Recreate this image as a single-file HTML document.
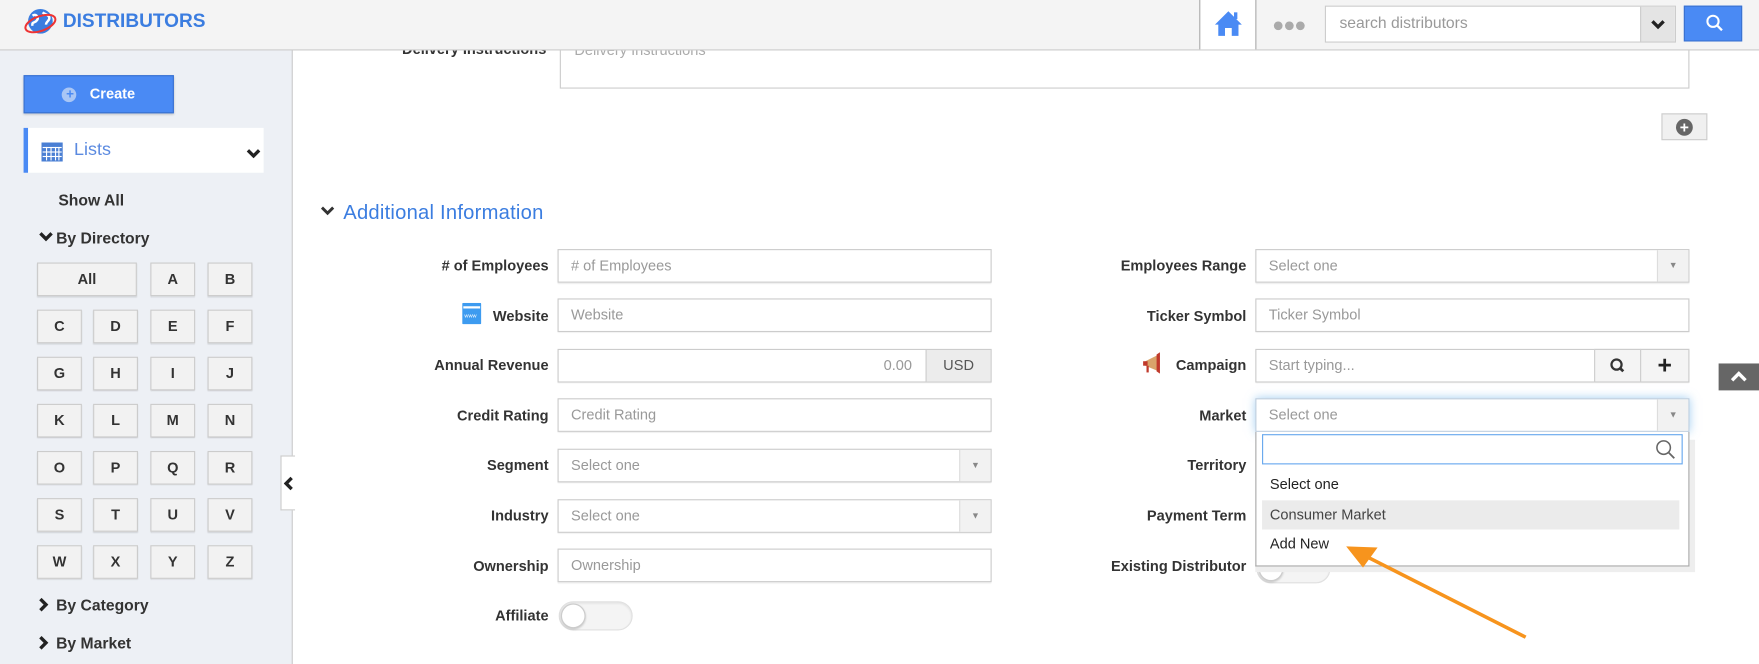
<!DOCTYPE html>
<html><head><meta charset="utf-8"><style>
*{box-sizing:border-box;margin:0;padding:0}
html,body{width:1759px;height:664px;overflow:hidden;background:#fff}
#w{position:absolute;left:0;top:0;width:1568px;height:592px;transform:scale(1.12181);transform-origin:0 0;font-family:"Liberation Sans",Arial,sans-serif;color:#333}
.a{position:absolute}
.hdr{left:0;top:0;width:1568px;height:45px;background:#f4f4f4;border-bottom:1px solid #ccc}
.side{left:0;top:45px;width:261px;height:547px;background:#edf0f5;border-right:1px solid #ccc}
.lb{font-size:13px;font-weight:bold;color:#333;text-align:right;width:200px;line-height:16px}
.in{height:30px;border:1px solid #ccc;background:#fff;font-size:13px;color:#999;padding-left:11px;line-height:28px;box-shadow:0 1px 1px rgba(0,0,0,.08)}
.btn{width:40px;height:30px;background:#f2f2f2;border:1px solid #ccc;box-shadow:0 1px 1px rgba(0,0,0,.12);text-align:center;font-size:13px;font-weight:bold;line-height:28px;color:#333}
.arr{position:absolute;right:0;top:0;width:28px;height:28px;background:#f2f2f2;border-left:1px solid #ddd;font-size:8px;color:#888;text-align:center;line-height:28px}
.tg{width:66px;height:26px;border-radius:13px;background:#f4f4f4;border:1px solid #e0e0e0;box-shadow:inset 0 1px 2px rgba(0,0,0,.08)}
.tg i{position:absolute;left:1px;top:1px;width:22px;height:22px;border-radius:50%;background:#fff;border:1px solid #ccc;box-shadow:0 1px 2px rgba(0,0,0,.2)}
</style></head><body><div id="w">
<div class="a lb" style="left:287px;top:36px">Delivery Instructions</div>
<div class="a" style="left:499px;top:20px;width:1007px;height:59px;border:1px solid #ccc;font-size:13px;color:#aaa;padding:16px 12px">Delivery Instructions</div>
<div class="hdr a"></div>
<svg class="a" style="left:21px;top:6px" width="30" height="28" viewBox="0 0 30 28"><circle cx="15" cy="13" r="11" fill="#3b7de0"/><path d="M8 8c3-2 6 1 4 4s-5 1-4 5M17 5c2 2 6 2 6 5s-3 3-3 6" stroke="#fff" stroke-width="2.2" fill="none"/><ellipse cx="15" cy="15" rx="14" ry="6.5" transform="rotate(-20 15 15)" stroke="#e33" stroke-width="1.8" fill="none"/></svg>
<div class="a" style="left:56px;top:9px;font-size:17px;font-weight:bold;color:#3b7de0">DISTRIBUTORS</div>
<div class="a" style="left:1069px;top:0;width:51px;height:44px;background:#fff;border-left:1px solid #aaa;border-right:1px solid #aaa"></div>
<svg class="a" style="left:1082px;top:8px" width="26" height="26" viewBox="0 0 26 26"><path d="M13 2L1 14h3v10h6v-7h6v7h6V14h3z" fill="#4a8af4"/><rect x="18" y="3" width="3" height="6" fill="#4a8af4"/></svg>
<div class="a" style="left:1134px;top:12px;font-size:18px;color:#aaa;letter-spacing:-1px">●●●</div>
<div class="a" style="left:1181px;top:5px;width:313px;height:33px;border:1px solid #ccc;background:#fff;font-size:14px;color:#999;padding-left:12px;line-height:29px">search distributors</div>
<div class="a" style="left:1462px;top:6px;width:31px;height:31px;background:#e4e4e4;border-left:1px solid #ccc;text-align:center"><svg width="14" height="31" viewBox="0 0 14 31"><path d="M2 13l5 5 5-5" stroke="#222" stroke-width="3" fill="none"/></svg></div>
<div class="a" style="left:1501px;top:5px;width:52px;height:32px;background:#4a8af4;border:1px solid #3a72d0"><svg width="52" height="30" viewBox="0 0 52 30"><circle cx="25" cy="13" r="5" stroke="#fff" stroke-width="1.8" fill="none"/><path d="M29 17l4 4" stroke="#fff" stroke-width="2"/></svg></div>

<div class="side a"></div>
<div class="a" style="left:21px;top:67px;width:134px;height:34px;background:#4a8af4;border:1px solid #3a72d0;box-shadow:0 1px 2px rgba(0,0,0,.2);color:#fff;font-size:13px;font-weight:bold;line-height:32px"><span style="position:absolute;left:33px;top:10px;width:13px;height:13px;border-radius:50%;background:#a9c6f5"></span><span style="position:absolute;left:37px;top:9px;color:#4a8af4;font-size:12px;line-height:14px">+</span><span style="position:absolute;left:58px">Create</span></div>
<div class="a" style="left:21px;top:114px;width:214px;height:40px;background:#fff;border-left:4px solid #4a8af4"></div>
<svg class="a" style="left:37px;top:127px" width="19" height="17" viewBox="0 0 19 17"><rect width="19" height="17" fill="#4a7fd4"/><g fill="#fff"><rect x="1" y="4" width="17" height="1"/><rect x="1" y="8" width="17" height="1"/><rect x="1" y="12" width="17" height="1"/><rect x="4" y="4" width="1" height="12"/><rect x="8" y="4" width="1" height="12"/><rect x="12" y="4" width="1" height="12"/><rect x="15" y="4" width="1" height="12"/></g></svg>
<div class="a" style="left:66px;top:125px;font-size:16px;color:#5b8ae0">Lists</div>
<svg class="a" style="left:219px;top:132px" width="14" height="10" viewBox="0 0 14 10"><path d="M2 2l5 5 5-5" stroke="#222" stroke-width="3" fill="none"/></svg>
<div class="a" style="left:52px;top:170px;font-size:14px;font-weight:bold">Show All</div>
<svg class="a" style="left:34px;top:206px" width="14" height="10" viewBox="0 0 14 10"><path d="M2 2l5 5 5-5" stroke="#222" stroke-width="3" fill="none"/></svg>
<div class="a" style="left:50px;top:204px;font-size:14px;font-weight:bold">By Directory</div>
<div class="a btn" style="left:33px;top:234px;width:89px">All</div>
<div class="a btn" style="left:134px;top:234px">A</div><div class="a btn" style="left:185px;top:234px">B</div>
<div class="a btn" style="left:33px;top:276px">C</div><div class="a btn" style="left:83px;top:276px">D</div><div class="a btn" style="left:134px;top:276px">E</div><div class="a btn" style="left:185px;top:276px">F</div>
<div class="a btn" style="left:33px;top:318px">G</div><div class="a btn" style="left:83px;top:318px">H</div><div class="a btn" style="left:134px;top:318px">I</div><div class="a btn" style="left:185px;top:318px">J</div>
<div class="a btn" style="left:33px;top:360px">K</div><div class="a btn" style="left:83px;top:360px">L</div><div class="a btn" style="left:134px;top:360px">M</div><div class="a btn" style="left:185px;top:360px">N</div>
<div class="a btn" style="left:33px;top:402px">O</div><div class="a btn" style="left:83px;top:402px">P</div><div class="a btn" style="left:134px;top:402px">Q</div><div class="a btn" style="left:185px;top:402px">R</div>
<div class="a btn" style="left:33px;top:444px">S</div><div class="a btn" style="left:83px;top:444px">T</div><div class="a btn" style="left:134px;top:444px">U</div><div class="a btn" style="left:185px;top:444px">V</div>
<div class="a btn" style="left:33px;top:486px">W</div><div class="a btn" style="left:83px;top:486px">X</div><div class="a btn" style="left:134px;top:486px">Y</div><div class="a btn" style="left:185px;top:486px">Z</div>
<svg class="a" style="left:34px;top:532px" width="10" height="14" viewBox="0 0 10 14"><path d="M2 2l5 5-5 5" stroke="#222" stroke-width="3" fill="none"/></svg>
<div class="a" style="left:50px;top:531px;font-size:14px;font-weight:bold">By Category</div>
<svg class="a" style="left:34px;top:566px" width="10" height="14" viewBox="0 0 10 14"><path d="M2 2l5 5-5 5" stroke="#222" stroke-width="3" fill="none"/></svg>
<div class="a" style="left:50px;top:565px;font-size:14px;font-weight:bold">By Market</div>
<div class="a" style="left:250px;top:406px;width:13px;height:49px;background:#fff;border:1px solid #ccc;border-right:none"></div>
<svg class="a" style="left:253px;top:424px" width="10" height="14" viewBox="0 0 10 14"><path d="M7 2L2 7l5 5" stroke="#222" stroke-width="3" fill="none"/></svg>

<div class="a" style="left:1481px;top:101px;width:41px;height:24px;background:#f0f0f0;border:1px solid #ccc"><span style="position:absolute;left:12px;top:4px;width:15px;height:15px;border-radius:50%;background:#666;color:#fff;font-size:14px;font-weight:bold;line-height:15px;text-align:center">+</span></div>

<svg class="a" style="left:285px;top:183px" width="14" height="10" viewBox="0 0 14 10"><path d="M2 2l5 5 5-5" stroke="#333" stroke-width="2.6" fill="none"/></svg>
<div class="a" style="left:306px;top:179px;font-size:18px;color:#3b7de0;letter-spacing:0.2px">Additional Information</div>

<div class="a lb" style="left:289px;top:229px"># of Employees</div>
<div class="a in" style="left:497px;top:222px;width:387px"># of Employees</div>
<svg class="a" style="left:412px;top:270px" width="17" height="19" viewBox="0 0 17 19"><rect width="17" height="19" rx="1" fill="#3d9bf0"/><rect x="1" y="3" width="15" height="2" fill="#fff"/><text x="2" y="13" font-size="5" fill="#fff" font-family="Liberation Sans">www</text></svg>
<div class="a lb" style="left:289px;top:274px">Website</div>
<div class="a in" style="left:497px;top:266px;width:387px">Website</div>
<div class="a lb" style="left:289px;top:318px">Annual Revenue</div>
<div class="a in" style="left:497px;top:311px;width:387px;padding:0"><span style="position:absolute;right:70px">0.00</span><span style="position:absolute;right:0;top:0;width:58px;height:28px;background:#ececec;border-left:1px solid #ccc;color:#555;text-align:center">USD</span></div>
<div class="a lb" style="left:289px;top:363px">Credit Rating</div>
<div class="a in" style="left:497px;top:355px;width:387px">Credit Rating</div>
<div class="a lb" style="left:289px;top:407px">Segment</div>
<div class="a in" style="left:497px;top:400px;width:387px">Select one<span class="arr">▼</span></div>
<div class="a lb" style="left:289px;top:452px">Industry</div>
<div class="a in" style="left:497px;top:445px;width:387px">Select one<span class="arr">▼</span></div>
<div class="a lb" style="left:289px;top:497px">Ownership</div>
<div class="a in" style="left:497px;top:489px;width:387px">Ownership</div>
<div class="a lb" style="left:289px;top:541px">Affiliate</div>
<div class="a tg" style="left:498px;top:536px"><i></i></div>

<div class="a lb" style="left:911px;top:229px">Employees Range</div>
<div class="a in" style="left:1119px;top:222px;width:387px">Select one<span class="arr">▼</span></div>
<div class="a lb" style="left:911px;top:274px">Ticker Symbol</div>
<div class="a in" style="left:1119px;top:266px;width:387px">Ticker Symbol</div>
<svg class="a" style="left:1018px;top:313px" width="22" height="22" viewBox="0 0 22 22"><path d="M3 9l12-6v15L3 13z" fill="#d9a36a"/><path d="M13 3l3-2v19l-3-2z" fill="#c0392b"/><rect x="1" y="9" width="4" height="4" fill="#c0392b"/><rect x="4" y="13" width="2" height="6" fill="#c0392b"/></svg>
<div class="a lb" style="left:911px;top:318px">Campaign</div>
<div class="a in" style="left:1119px;top:311px;width:387px">Start typing...</div>
<div class="a" style="left:1421px;top:311px;width:42px;height:30px;background:#f4f4f4;border:1px solid #ccc"><svg width="40" height="28" viewBox="0 0 40 28"><circle cx="19" cy="13" r="4.5" stroke="#333" stroke-width="2" fill="none"/><path d="M22 16l3 3" stroke="#333" stroke-width="2.5"/></svg></div>
<div class="a" style="left:1462px;top:311px;width:44px;height:30px;background:#f4f4f4;border:1px solid #ccc;text-align:center;font-size:22px;font-weight:bold;line-height:27px;color:#222">+</div>
<div class="a lb" style="left:911px;top:363px">Market</div>
<div class="a lb" style="left:911px;top:407px">Territory</div>
<div class="a lb" style="left:911px;top:452px">Payment Term</div>
<div class="a lb" style="left:911px;top:497px">Existing Distributor</div>
<div class="a tg" style="left:1120px;top:494px"><i></i></div>
<div class="a" style="left:1119px;top:392px;width:392px;height:118px;background:#eee"></div>
<div class="a in" style="left:1119px;top:355px;width:387px;box-shadow:0 0 8px rgba(102,175,233,.6);border-color:#bcd">Select one<span class="arr">▼</span></div>
<div class="a" style="left:1119px;top:385px;width:387px;height:120px;background:#fff;border:1px solid #aaa;border-top:none"></div>
<div class="a" style="left:1125px;top:387px;width:375px;height:27px;border:1px solid #66a7ee"><svg class="a" style="right:4px;top:3px" width="20" height="20" viewBox="0 0 20 20"><circle cx="8" cy="8" r="6" stroke="#666" stroke-width="1.4" fill="none"/><path d="M12.5 12.5l5 5" stroke="#666" stroke-width="1.6"/></svg></div>
<div class="a" style="left:1132px;top:424px;font-size:13px;color:#222">Select one</div>
<div class="a" style="left:1125px;top:446px;width:372px;height:26px;background:#ebebeb;font-size:13px;color:#444;padding-left:7px;line-height:26px">Consumer Market</div>
<div class="a" style="left:1132px;top:477px;font-size:13px;color:#222">Add New</div>
<svg class="a" style="left:1190px;top:478px" width="180" height="100" viewBox="0 0 180 100"><path d="M170 90L22 15" stroke="#f7941d" stroke-width="3.2"/><path d="M10 9l28 1-13 18z" fill="#f7941d"/></svg>
<div class="a" style="left:1532px;top:324px;width:36px;height:24px;background:#666"><svg width="36" height="24" viewBox="0 0 36 24"><path d="M12 15l6-6 6 6" stroke="#fff" stroke-width="3" fill="none"/></svg></div>
</div></body></html>
